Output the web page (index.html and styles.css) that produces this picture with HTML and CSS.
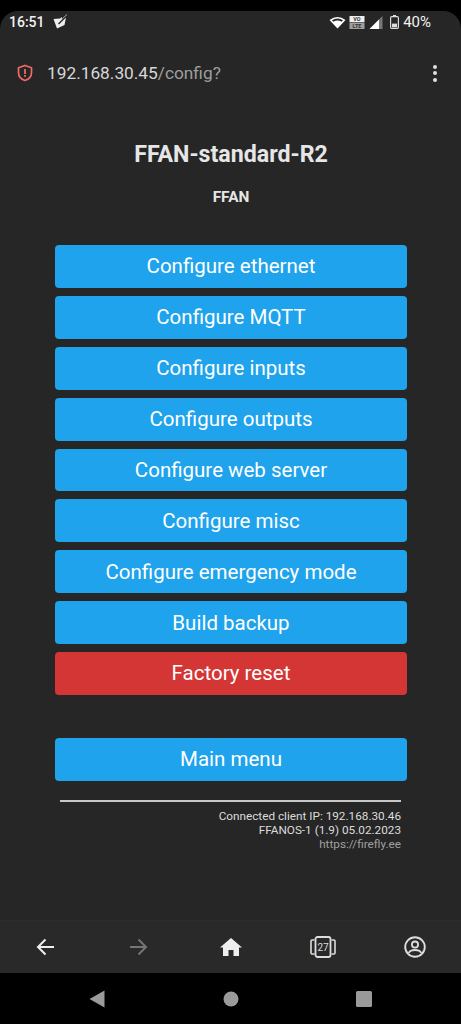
FILE: index.html
```html
<!DOCTYPE html>
<html>
<head>
    <title>FFAN-standard-R2</title>
    <link rel="stylesheet" href="styles.css">
</head>
<body>
    <div class="screen">
        <div class="status-bar">
            <div class="status-left">
                <span>16:51</span>
                <svg class="note-icon" width="15" height="16" viewBox="0 0 15 16">
                    <path d="M0.5 5 L7 4.5 L9 3 L8.8 5 L13 3.5 L11.5 11 L4 14.5 Z" fill="#eee"/>
                    <path d="M5.5 10 L14 1.5" stroke="#272727" stroke-width="1.4"/>
                    <path d="M9.5 4.5 L14 0.5" stroke="#ccc" stroke-width="0.8"/>
                </svg>
            </div>
            <div class="status-right">
                <svg class="wifi" width="17" height="13" viewBox="0 0 17 13">
                    <path d="M0.5 4 Q8.5 -2 16.5 4 L8.5 12.5 Z" fill="#fff"/>
                    <path d="M3 4.2 Q8.5 0.6 14 4.2 L12.6 5.8 Q8.5 3.4 4.4 5.8 Z" fill="#272727"/>
                </svg>
                <svg class="volte" width="16" height="13" viewBox="0 0 16 13">
                    <rect x="0.5" y="0" width="15" height="6" fill="#eee"/>
                    <rect x="0.5" y="6.5" width="15" height="6.5" fill="#a0a0a0"/>
                    <text x="8" y="5" class="volte-text">VO</text>
                    <text x="8" y="12" class="volte-text">LTE</text>
                </svg>
                <svg class="signal" width="14" height="13" viewBox="0 0 14 13">
                    <path d="M13.5 0 V13 H0.5 Z" fill="#777"/>
                    <path d="M10 3.6 V13 H0.5 Z" fill="#fff"/>
                </svg>
                <svg class="battery" width="9" height="14" viewBox="0 0 9 14">
                    <rect x="0.6" y="1.6" width="7.8" height="11.8" rx="1.2" fill="none" stroke="#ddd" stroke-width="1.2"/>
                    <rect x="3" y="0" width="3" height="1.6" fill="#ddd"/>
                    <rect x="2" y="8.6" width="5" height="3.6" fill="#ddd"/>
                </svg>
                <span class="battery-text">40%</span>
            </div>
        </div>

        <div class="url-bar">
            <svg class="shield" width="18" height="18" viewBox="0 0 18 18">
                <path d="M9 1.5 L15.5 3.8 V8.5 C15.5 12.4 12.8 15.3 9 16.5 C5.2 15.3 2.5 12.4 2.5 8.5 V3.8 Z" fill="none" stroke="#ee6a66" stroke-width="1.7"/>
                <rect x="8.1" y="5" width="1.8" height="5" fill="#ee6a66"/>
                <rect x="8.1" y="11" width="1.8" height="1.8" fill="#ee6a66"/>
            </svg>
            <div class="url"><span class="host">192.168.30.45</span>/config?</div>
            <div class="menu-dots"><i></i><i></i><i></i></div>
        </div>

        <div class="content">
            <h2>FFAN-standard-R2</h2>
            <h3>FFAN</h3>
            <div class="button-group">
                <button>Configure ethernet</button>
                <button>Configure MQTT</button>
                <button>Configure inputs</button>
                <button>Configure outputs</button>
                <button>Configure web server</button>
                <button>Configure misc</button>
                <button>Configure emergency mode</button>
                <button>Build backup</button>
                <button class="danger">Factory reset</button>
            </div>
            <button class="main-menu">Main menu</button>
            <hr>
            <div class="footer-info">
                <div>Connected client IP: 192.168.30.46</div>
                <div>FFANOS-1 (1.9) 05.02.2023</div>
                <div class="link">https://firefly.ee</div>
            </div>
        </div>

        <div class="browser-nav">
            <div class="nav-item">
                <svg width="20" height="20" viewBox="0 0 20 20">
                    <path d="M18 10 H2.5 M9.5 2.5 L2 10 L9.5 17.5" fill="none" stroke="#eee" stroke-width="2"/>
                </svg>
            </div>
            <div class="nav-item">
                <svg width="20" height="20" viewBox="0 0 20 20">
                    <path d="M2 10 H17.5 M10.5 2.5 L18 10 L10.5 17.5" fill="none" stroke="#757575" stroke-width="2"/>
                </svg>
            </div>
            <div class="nav-item">
                <svg width="22" height="20" viewBox="0 0 22 20">
                    <path d="M11 1 L22 10.5 H19 V19 H13.5 V13 H8.5 V19 H3 V10.5 H0 Z" fill="#eee"/>
                </svg>
            </div>
            <div class="nav-item">
                <svg width="26" height="22" viewBox="0 0 26 22">
                    <rect x="5.5" y="1" width="15" height="20" rx="2" fill="none" stroke="#ddd" stroke-width="1.8"/>
                    <path d="M4.5 4 H2 Q1 4 1 5 V17 Q1 18 2 18 H4.5 M21.5 4 H24 Q25 4 25 5 V17 Q25 18 24 18 H21.5" fill="none" stroke="#ddd" stroke-width="1.6"/>
                    <text x="13" y="14.5" class="tab-count">27</text>
                </svg>
            </div>
            <div class="nav-item">
                <svg width="22" height="22" viewBox="0 0 22 22">
                    <circle cx="11" cy="11" r="9.8" fill="none" stroke="#ddd" stroke-width="1.9"/>
                    <circle cx="11" cy="8.6" r="3.1" fill="none" stroke="#ddd" stroke-width="1.8"/>
                    <path d="M4.8 17 Q6 14 11 14 Q16 14 17.2 17" fill="none" stroke="#ddd" stroke-width="1.8"/>
                </svg>
            </div>
        </div>
    </div>

    <div class="android-nav">
        <svg width="16" height="18" viewBox="0 0 16 18"><path d="M15.5 0.5 V17.5 L0.5 9 Z" fill="#9a9a9a"/></svg>
        <svg width="16" height="16" viewBox="0 0 16 16"><circle cx="8" cy="8" r="7.5" fill="#9a9a9a"/></svg>
        <svg width="16" height="16" viewBox="0 0 16 16"><rect width="16" height="16" rx="1.5" fill="#9a9a9a"/></svg>
    </div>
</body>
</html>
```

FILE: styles.css
```css
html, body {
    margin: 0;
    padding: 0;
    background: #000;
}
body {
    width: 461px;
    height: 1024px;
    overflow: hidden;
    font-family: Roboto, "Liberation Sans", sans-serif;
}
.screen {
    margin-top: 11px;
    height: 962px;
    background: #262626;
    border-radius: 18px 18px 0 0;
    display: flex;
    flex-direction: column;
}
.status-bar {
    height: 22px;
    padding: 0 30px 0 9px;
    display: flex;
    justify-content: space-between;
    align-items: center;
    color: #f2f2f2;
    font-size: 14px;
    font-weight: 500;
}
.status-left {
    display: flex;
    align-items: center;
    gap: 8px;
}
.status-right {
    display: flex;
    align-items: center;
}
.volte {
    margin-left: 3px;
}
.signal {
    margin-left: 4px;
}
.battery {
    margin-left: 7px;
}
.battery-text {
    font-size: 15px;
    font-weight: 400;
    margin-left: 4px;
}
.volte-text {
    fill: #333;
    font-family: Roboto, sans-serif;
    font-size: 5.5px;
    font-weight: 700;
    text-anchor: middle;
}
.url-bar {
    height: 56px;
    margin-top: 12px;
    padding: 0 24px 0 16px;
    display: flex;
    align-items: center;
}
.shield {
    flex: none;
}
.url {
    margin-left: 13px;
    flex: 1;
    font-size: 17.3px;
    color: #9e9e9e;
}
.host {
    color: #d8d8d8;
}
.menu-dots {
    display: flex;
    flex-direction: column;
    gap: 2.5px;
}
.menu-dots i {
    display: block;
    width: 4px;
    height: 4px;
    border-radius: 50%;
    background: #e0e0e0;
}
.content {
    flex: 1;
    padding: 0 54px 0 55px;
    display: flex;
    flex-direction: column;
    color: #e6e6e6;
}
h2 {
    margin: 41px 0 0 0;
    height: 25px;
    line-height: 25px;
    font-size: 23.2px;
    font-weight: 700;
    text-align: center;
}
h3 {
    margin: 22px 0 0 0;
    height: 17px;
    line-height: 17px;
    font-size: 15.4px;
    font-weight: 700;
    text-align: center;
}
.button-group {
    margin-top: 39px;
    display: flex;
    flex-direction: column;
    gap: 8px;
}
button {
    display: block;
    width: 100%;
    height: 42.875px;
    padding: 0;
    border: none;
    border-radius: 4px;
    background: #1fa3ec;
    color: #fff;
    font-family: inherit;
    font-size: 20.5px;
    line-height: 42px;
}
.danger {
    background: #d43535;
}
.main-menu {
    margin-top: 43.1px;
}
hr {
    margin: 19px 6px 0 5px;
    height: 2px;
    border: none;
    background: #c8c8c8;
}
.footer-info {
    margin: 7px 6px 0 0;
    text-align: right;
    font-size: 11.75px;
    line-height: 14px;
    color: #dcdcdc;
}
.link {
    color: #a0a0a0;
}
.browser-nav {
    height: 52px;
    display: flex;
    align-items: center;
    border-top: 1px solid #2c2c2c;
    background: #292929;
}
.nav-item {
    flex: 1;
    display: flex;
    justify-content: center;
}
.tab-count {
    fill: #ddd;
    font-family: Roboto, sans-serif;
    font-size: 10px;
    text-anchor: middle;
}
.android-nav {
    height: 51px;
    padding: 0 89px;
    display: flex;
    justify-content: space-between;
    align-items: center;
}
```
